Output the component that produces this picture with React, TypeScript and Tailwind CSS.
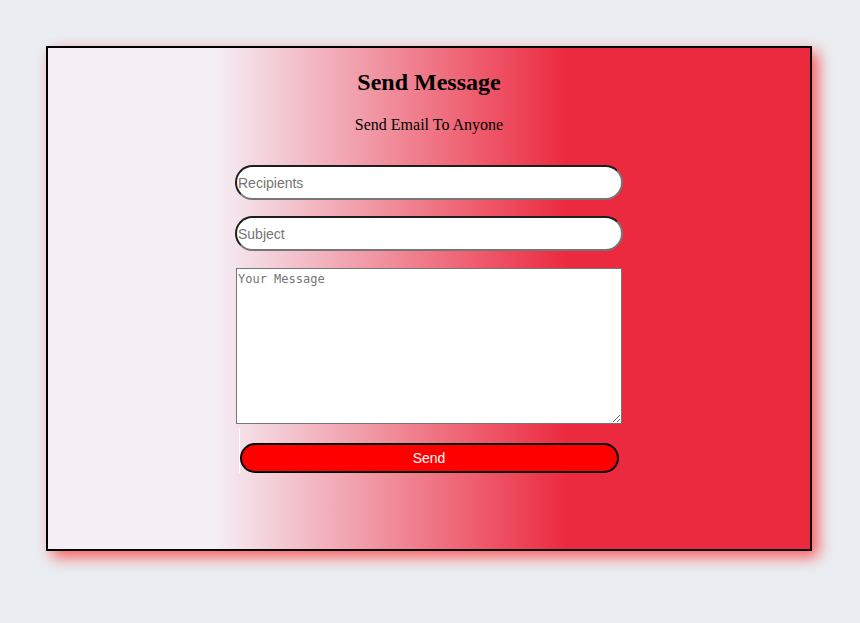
import React from 'react';

const App: React.FC = () => {
  return (
    <div className="min-h-screen w-full bg-[#eaeef2] pt-[46px]">
      <div
        className="ml-[46px] w-[766px] h-[505px] border-2 border-black bg-[linear-gradient(to_right,#f5eef5_22%,#ec2a3f_68%)] shadow-[6px_6px_14px_rgba(255,40,40,0.75)] flex flex-col items-center"
        style={{ fontFamily: '"Liberation Serif", "Times New Roman", serif' }}
      >
        <h2 className="mt-[20px] text-[24px] leading-[28px] font-bold text-black">Send Message</h2>
        <p className="mt-[20px] text-[16px] leading-[18px] text-black">Send Email To Anyone</p>

        <form className="mt-[31px] flex flex-col items-center" onSubmit={(e) => e.preventDefault()}>
          <input
            type="text"
            placeholder="Recipients"
            className="w-[388px] h-[35px] rounded-full border-2 border-t-[#1e1e1e] border-l-[#1e1e1e] border-b-[#767676] border-r-[#767676] bg-white px-[1px] text-[14px] text-black placeholder:text-[#757575] outline-none"
            style={{ fontFamily: '"Liberation Sans", Arial, sans-serif' }}
          />
          <input
            type="text"
            placeholder="Subject"
            className="mt-[16px] w-[388px] h-[35px] rounded-full border-2 border-t-[#1e1e1e] border-l-[#1e1e1e] border-b-[#767676] border-r-[#767676] bg-white px-[1px] text-[14px] text-black placeholder:text-[#757575] outline-none"
            style={{ fontFamily: '"Liberation Sans", Arial, sans-serif' }}
          />
          <textarea
            placeholder="Your Message"
            className="mt-[17px] w-[386px] h-[156px] border border-[#767676] bg-white px-[1px] py-[1px] text-[12px] text-black placeholder:text-[#757575] outline-none"
            style={{ fontFamily: '"DejaVu Sans Mono", "Liberation Mono", monospace' }}
          />
          <div className="relative w-[386px] flex justify-center">
            <div className="absolute left-[3px] top-[4px] w-px h-[45px] bg-white"></div>
            <button
              type="submit"
              className="mt-[19px] w-[379px] h-[30px] rounded-full border-2 border-black bg-[#ff0000] text-white text-[14px] font-normal"
              style={{ fontFamily: '"Liberation Sans", Arial, sans-serif' }}
            >
              Send
            </button>
          </div>
        </form>
      </div>
    </div>
  );
};

export default App;
